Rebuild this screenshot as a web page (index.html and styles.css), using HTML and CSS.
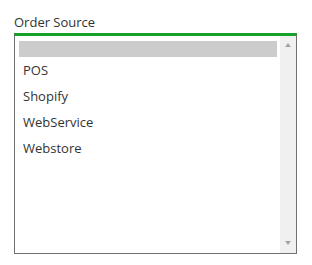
FILE: index.html
```html
<!DOCTYPE html>
<html>
<head>
<meta charset="utf-8">
<link rel="stylesheet" href="styles.css">
</head>
<body>
<div class="field">
  <div class="label">Order Source</div>
  <div class="listbox">
    <div class="options">
      <div class="opt blank selected"></div>
      <div class="opt">POS</div>
      <div class="opt">Shopify</div>
      <div class="opt">WebService</div>
      <div class="opt">Webstore</div>
    </div>
    <div class="scrollbar">
      <span class="arrow up"></span>
      <span class="arrow down"></span>
    </div>
  </div>
</div>
</body>
</html>
```
FILE: styles.css
```css
html, body { margin: 0; padding: 0; background: #fff; }
body {
  font-family: "Open Sans", sans-serif;
  font-size: 13px;
  color: #333;
}
.field {
  padding: 13px 0 0 14px;
  width: 283px;
}
.label {
  line-height: 18px;
  height: 18px;
  margin-bottom: 2px;
  color: #333;
}
.listbox {
  box-sizing: border-box;
  height: 221px;
  border: 1px solid #707070;
  border-top: 3px solid #14a22c;
  display: flex;
}
.options {
  flex: 1;
  padding: 5px 3px 0 4px;
}
.opt {
  height: 26px;
  line-height: 26px;
  padding-left: 4px;
  color: #333;
}
.opt.blank { height: 16px; }
.opt.selected { background: #cccccc; }
.scrollbar {
  width: 16px;
  background: #f0f0f0;
  display: flex;
  flex-direction: column;
  justify-content: space-between;
  align-items: center;
  padding: 7px 0 8px;
}
.arrow {
  width: 0; height: 0;
  border-left: 3.5px solid transparent;
  border-right: 3.5px solid transparent;
}
.arrow.up { border-bottom: 4px solid #a3a3a3; }
.arrow.down { border-top: 4px solid #a3a3a3; }
```
